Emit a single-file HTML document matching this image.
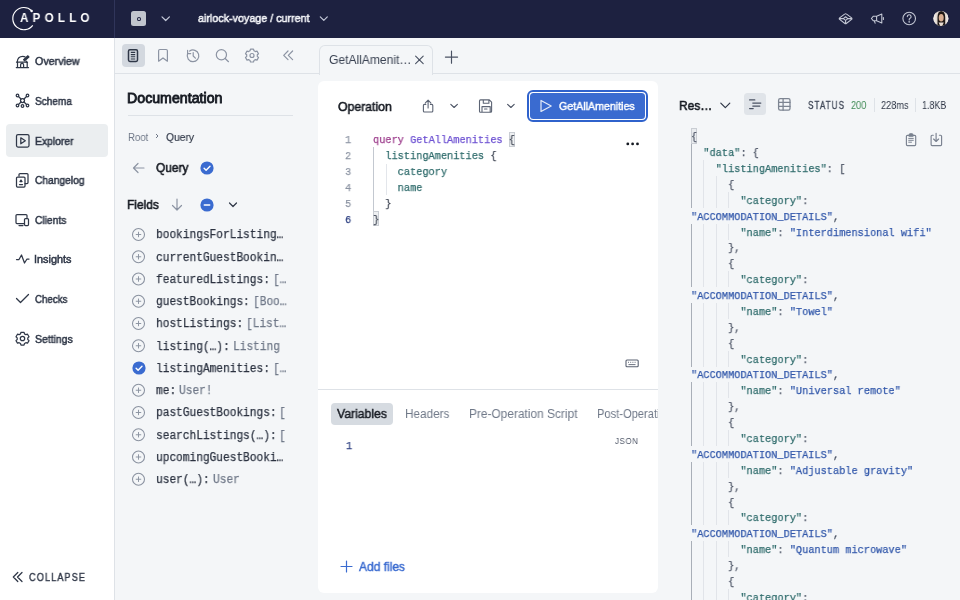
<!DOCTYPE html>
<html><head><meta charset="utf-8">
<style>
*{box-sizing:border-box;margin:0;padding:0}
html,body{width:960px;height:600px;overflow:hidden;background:#F4F6F8;font-family:"Liberation Sans",sans-serif}
.r{position:absolute}
.s{position:absolute;overflow:visible}
.t{position:absolute;white-space:pre;transform-origin:0 0;will-change:transform}
.mono{font-family:"Liberation Mono",monospace;-webkit-text-stroke:0.25px currentColor}
</style></head><body>
<div class="r" style="left:0;top:0;width:960px;height:38px;background:#1D2140"></div>
<div class="r" style="left:114px;top:0;width:1px;height:38px;background:#30355A"></div>
<svg class="s" style="left:0;top:0" width="110" height="38" viewBox="0 0 110 38">
 <path d="M31.75 10.75 A11.1 11.1 0 1 0 32.76 25.28" fill="none" stroke="#fff" stroke-width="1.15"/>
 <circle cx="31.6" cy="11" r="1.25" fill="#fff"/></svg>
<div class="r" style="left:131.25px;top:11.2px;width:14.9px;height:14.9px;border-radius:2.5px;background:#C1C5CE"></div>
<div class="r" style="left:136.8px;top:16.8px;width:4.3px;height:4px;border-radius:50%;border:1.3px solid #1D2140"></div>
<svg class="s" style="left:0;top:0" width="340" height="38" viewBox="0 0 340 38" fill="none" stroke="#C3C8D8" stroke-width="1.2" stroke-linecap="round" stroke-linejoin="round">
 <path d="M162 16.8l3.7 3.7l3.7-3.7"/><path d="M320.3 16.9l3.5 3.5l3.5-3.5"/></svg>
<svg class="s" style="left:830px;top:0" width="130" height="38" viewBox="830 0 130 38" fill="none" stroke="#C3C7D4" stroke-width="1.1" stroke-linecap="round" stroke-linejoin="round">
 <path d="M844.6 14.1a1.6 1.6 0 0 1 2 0l5 3.8a1 1 0 0 1 0 1.5l-5 3.8a1.6 1.6 0 0 1-2 0l-5-3.8a1 1 0 0 1 0-1.5z M840 18.6l3.3-.1 M848 18.6l3.5 0 M843.3 18.6l2.3-1.8l2.3 1.8l-2.3 1.8z M845.6 20.4v3.2"/>
 <path d="M871.4 18.5l2-2.3h3.2l5.2-2.2v9l-5.2-2.2h-3.2z M876.6 16.2v4.6 M874.3 20.8l.8 2.4 M883.4 17.6v1.8"/>
 <circle cx="909.2" cy="18.5" r="6.3"/>
 <path d="M907.3 16.6a1.9 1.9 0 1 1 2.6 1.8c-.5.2-.7.6-.7 1.1v.5"/><circle cx="909.2" cy="21.8" r=".3" fill="#C3C7D4"/>
</svg>
<svg class="s" style="left:933px;top:10px" width="17" height="17" viewBox="933 10 17 17">
 <defs><clipPath id="av"><circle cx="940.9" cy="18.4" r="7.5"/></clipPath></defs>
 <g clip-path="url(#av)">
  <rect x="933" y="10" width="17" height="17" fill="#E3DAD2"/>
  <path d="M937.5 27V17c0-4 1.6-6 3.8-6s3.9 2 3.9 6v10z" fill="#1E1714"/>
  <ellipse cx="941.2" cy="17.8" rx="2.5" ry="3.8" fill="#D9AF93"/>
  <path d="M938.6 22.5c.8 1.8 1.8 4.5 2.6 4.5s1.8-2.7 2.6-4.5" fill="#E9DCD3"/>
  <rect x="933" y="10" width="2.6" height="17" fill="#EFE9E4"/>
  <rect x="946.5" y="10" width="3" height="17" fill="#EDE7E6"/>
 </g></svg>
<div class="r" style="left:0;top:38px;width:114px;height:562px;background:#fff"></div>
<div class="r" style="left:114px;top:38px;width:1px;height:562px;background:#DEE2E7"></div>
<div class="r" style="left:6.4px;top:124px;width:101.6px;height:33px;border-radius:4px;background:#EBEEF0"></div>
<svg class="s" style="left:0;top:0" width="114" height="600" viewBox="0 0 114 600" fill="none" stroke="#2F3747" stroke-width="1.25" stroke-linecap="round" stroke-linejoin="round">
 <path d="M16.3 67.6h12.2M17.5 67.6v-5.4M27.2 67.6v-5.4M16.5 62.2h11M17.2 62c.3-3.5 2.8-5.6 5.7-5.6c.8 0 1.5.2 2.1.4M20.6 67.6v-2.8a1.5 1.5 0 0 1 3 0v2.8"/><path d="M23.6 59.6l4.3-3.8l1 1.2l-4.3 3.8z" fill="#2F3747"/><path d="M26.3 61.2v1"/>
 <circle cx="22.5" cy="100.5" r="2"/><circle cx="17.5" cy="95.5" r="1.3"/><circle cx="27.5" cy="95.5" r="1.3"/><circle cx="17.5" cy="105.5" r="1.3"/><circle cx="27.5" cy="105.5" r="1.3"/><circle cx="22.5" cy="106" r="1.3"/>
 <path d="M18.5 96.5l2.5 2.5M26.5 96.5l-2.5 2.5M18.5 104.5l2.5-2.5M26.5 104.5l-2.5-2.5"/>
 <rect x="16.5" y="134.5" width="12.5" height="12.5" rx="1.5"/><path d="M20.8 137.8v6l4.5-3z"/>
 <rect x="16.5" y="177" width="8.5" height="10" rx="1"/><path d="M19 176v-1.5a1 1 0 0 1 1-1h7a1 1 0 0 1 1 1v8a1 1 0 0 1-1 1h-2M19.5 184.5h3M21 180l1 1.5h-2z"/>
 <path d="M24 223.5h-7a1 1 0 0 1-1-1v-7a1 1 0 0 1 1-1h9a1 1 0 0 1 1 1v2M19 225.5h4"/><rect x="24.5" y="218.5" width="4" height="7" rx="1"/>
 <path d="M16.5 259.5h2.5l2.5-4.5l3 8l2.5-4h2"/>
 <path d="M16.5 298.5l4 4l8-8"/>
 <circle cx="22.5" cy="338.5" r="2.2"/>
 <path d="M21 332.3h3l.5 1.6 1.4.8 1.6-.5 1.5 2.6-1.2 1.1v1.6l1.2 1.1-1.5 2.6-1.6-.5-1.4.8-.5 1.6h-3l-.5-1.6-1.4-.8-1.6.5-1.5-2.6 1.2-1.1v-1.6l-1.2-1.1 1.5-2.6 1.6.5 1.4-.8z"/>
 <path d="M17.8 572.5L13.3 577l4.5 4.5M22 572.5L17.5 577l4.5 4.5"/>
</svg>
<div class="r" style="left:115px;top:73px;width:845px;height:1px;background:#DEE2E7"></div>
<div class="r" style="left:121.5px;top:44px;width:23px;height:22.5px;border-radius:4px;background:#D3D8DF"></div>
<svg class="s" style="left:0;top:0" width="310" height="80" viewBox="0 0 310 80" fill="none" stroke-width="1.2" stroke-linecap="round" stroke-linejoin="round">
 <g stroke="#2F3747"><rect x="128.5" y="49.8" width="9" height="11.6" rx="1.4" stroke-width="1.5"/><path d="M130.8 52.4h4.4M130.8 54.6h4.4M130.8 56.8h4.4M130.8 59h4.4" stroke-width="1.1" stroke-linecap="butt"/></g>
 <g stroke="#8C94A3">
 <path d="M158.6 61.2V50.8a1.3 1.3 0 0 1 1.3-1.3h6.2a1.3 1.3 0 0 1 1.3 1.3v10.4l-4.4-3.3z"/>
 <path d="M189.67 51.05A5.8 5.8 0 1 1 187.55 53.82M187.6 50.4v3.2h3.1M193.2 52.6v3.4l2.2 2.1"/>
 <circle cx="221.4" cy="54.7" r="5.1"/><path d="M225.2 58.5l3.3 3.2"/>
 <circle cx="252" cy="55.5" r="2"/><path d="M250.5 49.2h3l.5 1.6 1.4.8 1.6-.5 1.5 2.6-1.2 1.1v1.6l1.2 1.1-1.5 2.6-1.6-.5-1.4.8-.5 1.6h-3l-.5-1.6-1.4-.8-1.6.5-1.5-2.6 1.2-1.1v-1.6l-1.2-1.1 1.5-2.6 1.6.5 1.4-.8z"/>
 <path d="M288 51l-4.3 4.3l4.3 4.3M292.6 51l-4.3 4.3l4.3 4.3"/>
 </g></svg>
<div class="r" style="left:128px;top:115px;width:165px;height:1px;background:#DEE2E7"></div>
<svg class="s" style="left:151px;top:129px" width="12" height="14" viewBox="0 0 12 14" fill="none" stroke="#6F7888" stroke-width="1"><path d="M5 5l2 2l-2 2"/></svg>
<svg class="s" style="left:130px;top:161px" width="16" height="14" viewBox="0 0 16 14" fill="none" stroke="#8C94A3" stroke-width="1.2" stroke-linecap="round" stroke-linejoin="round"><path d="M14 7H3.5M8 2.5L3.5 7l4.5 4.5"/></svg>
<svg class="s" style="left:199.9px;top:161.3px" width="14" height="14" viewBox="0 0 14 14"><circle cx="7" cy="7" r="6.6" fill="#3A6BD0"/><path d="M4.1 7.3l2 2l3.9-4.1" fill="none" stroke="#fff" stroke-width="1.4" stroke-linecap="round" stroke-linejoin="round"/></svg>
<svg class="s" style="left:170px;top:197px" width="14" height="16" viewBox="0 0 14 16" fill="none" stroke="#8C94A3" stroke-width="1.2" stroke-linecap="round" stroke-linejoin="round"><path d="M7 2v11M2.5 8.5L7 13l4.5-4.5"/></svg>
<svg class="s" style="left:200px;top:198px" width="14" height="14" viewBox="0 0 14 14"><circle cx="7" cy="7" r="6.6" fill="#3A6BD0"/><path d="M4.3 7h5.4" stroke="#fff" stroke-width="1.5" stroke-linecap="round"/></svg>
<svg class="s" style="left:227px;top:199px" width="12" height="12" viewBox="0 0 12 12" fill="none" stroke="#2F3747" stroke-width="1.2" stroke-linecap="round" stroke-linejoin="round"><path d="M2.5 4l3.5 3.5l3.5-3.5"/></svg>
<svg class="s" style="left:131px;top:227px" width="16" height="16" viewBox="0 0 16 16" fill="none" stroke="#8A92A0" stroke-width="1.05"><circle cx="7.5" cy="7.50" r="6"/><path d="M7.5 4.80v5.4M4.8 7.50h5.4" stroke-width=".95"/></svg>
<div class="t mono" style="left:156.2px;top:229.38px;font-size:12.0px;line-height:12.0px;color:#2B3240;transform:scaleX(0.9306)">bookingsForListing…</div>
<svg class="s" style="left:131px;top:249px" width="16" height="16" viewBox="0 0 16 16" fill="none" stroke="#8A92A0" stroke-width="1.05"><circle cx="7.5" cy="7.75" r="6"/><path d="M7.5 5.05v5.4M4.8 7.75h5.4" stroke-width=".95"/></svg>
<div class="t mono" style="left:156.2px;top:251.63px;font-size:12.0px;line-height:12.0px;color:#2B3240;transform:scaleX(0.9306)">currentGuestBookin…</div>
<svg class="s" style="left:131px;top:272px" width="16" height="16" viewBox="0 0 16 16" fill="none" stroke="#8A92A0" stroke-width="1.05"><circle cx="7.5" cy="7.00" r="6"/><path d="M7.5 4.30v5.4M4.8 7.00h5.4" stroke-width=".95"/></svg>
<div class="t mono" style="left:156.2px;top:273.88px;font-size:12.0px;line-height:12.0px;color:#2B3240;transform:scaleX(0.9306)">featuredListings:</div>
<div class="t mono" style="left:272.90px;top:273.88px;font-size:12.0px;line-height:12.0px;color:#6F7888;transform:scaleX(0.9306)">[…</div>
<svg class="s" style="left:131px;top:294px" width="16" height="16" viewBox="0 0 16 16" fill="none" stroke="#8A92A0" stroke-width="1.05"><circle cx="7.5" cy="7.25" r="6"/><path d="M7.5 4.55v5.4M4.8 7.25h5.4" stroke-width=".95"/></svg>
<div class="t mono" style="left:156.2px;top:296.13px;font-size:12.0px;line-height:12.0px;color:#2B3240;transform:scaleX(0.9306)">guestBookings:</div>
<div class="t mono" style="left:252.80px;top:296.13px;font-size:12.0px;line-height:12.0px;color:#6F7888;transform:scaleX(0.9306)">[Boo…</div>
<svg class="s" style="left:131px;top:316px" width="16" height="16" viewBox="0 0 16 16" fill="none" stroke="#8A92A0" stroke-width="1.05"><circle cx="7.5" cy="7.50" r="6"/><path d="M7.5 4.80v5.4M4.8 7.50h5.4" stroke-width=".95"/></svg>
<div class="t mono" style="left:156.2px;top:318.38px;font-size:12.0px;line-height:12.0px;color:#2B3240;transform:scaleX(0.9306)">hostListings:</div>
<div class="t mono" style="left:246.20px;top:318.38px;font-size:12.0px;line-height:12.0px;color:#6F7888;transform:scaleX(0.9306)">[List…</div>
<svg class="s" style="left:131px;top:338px" width="16" height="16" viewBox="0 0 16 16" fill="none" stroke="#8A92A0" stroke-width="1.05"><circle cx="7.5" cy="7.75" r="6"/><path d="M7.5 5.05v5.4M4.8 7.75h5.4" stroke-width=".95"/></svg>
<div class="t mono" style="left:156.2px;top:340.63px;font-size:12.0px;line-height:12.0px;color:#2B3240;transform:scaleX(0.9306)">listing(…):</div>
<div class="t mono" style="left:232.90px;top:340.63px;font-size:12.0px;line-height:12.0px;color:#6F7888;transform:scaleX(0.9306)">Listing</div>
<svg class="s" style="left:131.60px;top:361.00px" width="14" height="14" viewBox="0 0 14 14"><circle cx="7" cy="7" r="6.6" fill="#3A6BD0"/><path d="M4.1 7.3l2 2l3.9-4.1" fill="none" stroke="#fff" stroke-width="1.4" stroke-linecap="round" stroke-linejoin="round"/></svg>
<div class="t mono" style="left:156.2px;top:362.88px;font-size:12.0px;line-height:12.0px;color:#2B3240;transform:scaleX(0.9306)">listingAmenities:</div>
<div class="t mono" style="left:272.90px;top:362.88px;font-size:12.0px;line-height:12.0px;color:#6F7888;transform:scaleX(0.9306)">[…</div>
<svg class="s" style="left:131px;top:383px" width="16" height="16" viewBox="0 0 16 16" fill="none" stroke="#8A92A0" stroke-width="1.05"><circle cx="7.5" cy="7.25" r="6"/><path d="M7.5 4.55v5.4M4.8 7.25h5.4" stroke-width=".95"/></svg>
<div class="t mono" style="left:156.2px;top:385.13px;font-size:12.0px;line-height:12.0px;color:#2B3240;transform:scaleX(0.9306)">me:</div>
<div class="t mono" style="left:179.40px;top:385.13px;font-size:12.0px;line-height:12.0px;color:#6F7888;transform:scaleX(0.9306)">User!</div>
<svg class="s" style="left:131px;top:405px" width="16" height="16" viewBox="0 0 16 16" fill="none" stroke="#8A92A0" stroke-width="1.05"><circle cx="7.5" cy="7.50" r="6"/><path d="M7.5 4.80v5.4M4.8 7.50h5.4" stroke-width=".95"/></svg>
<div class="t mono" style="left:156.2px;top:407.38px;font-size:12.0px;line-height:12.0px;color:#2B3240;transform:scaleX(0.9306)">pastGuestBookings:</div>
<div class="t mono" style="left:278.70px;top:407.38px;font-size:12.0px;line-height:12.0px;color:#6F7888;transform:scaleX(0.9306)">[</div>
<svg class="s" style="left:131px;top:427px" width="16" height="16" viewBox="0 0 16 16" fill="none" stroke="#8A92A0" stroke-width="1.05"><circle cx="7.5" cy="7.75" r="6"/><path d="M7.5 5.05v5.4M4.8 7.75h5.4" stroke-width=".95"/></svg>
<div class="t mono" style="left:156.2px;top:429.63px;font-size:12.0px;line-height:12.0px;color:#2B3240;transform:scaleX(0.9306)">searchListings(…):</div>
<div class="t mono" style="left:278.70px;top:429.63px;font-size:12.0px;line-height:12.0px;color:#6F7888;transform:scaleX(0.9306)">[</div>
<svg class="s" style="left:131px;top:450px" width="16" height="16" viewBox="0 0 16 16" fill="none" stroke="#8A92A0" stroke-width="1.05"><circle cx="7.5" cy="7.00" r="6"/><path d="M7.5 4.30v5.4M4.8 7.00h5.4" stroke-width=".95"/></svg>
<div class="t mono" style="left:156.2px;top:451.88px;font-size:12.0px;line-height:12.0px;color:#2B3240;transform:scaleX(0.9306)">upcomingGuestBooki…</div>
<svg class="s" style="left:131px;top:472px" width="16" height="16" viewBox="0 0 16 16" fill="none" stroke="#8A92A0" stroke-width="1.05"><circle cx="7.5" cy="7.25" r="6"/><path d="M7.5 4.55v5.4M4.8 7.25h5.4" stroke-width=".95"/></svg>
<div class="t mono" style="left:156.2px;top:474.13px;font-size:12.0px;line-height:12.0px;color:#2B3240;transform:scaleX(0.9306)">user(…):</div>
<div class="t mono" style="left:212.80px;top:474.13px;font-size:12.0px;line-height:12.0px;color:#6F7888;transform:scaleX(0.9306)">User</div>
<div class="r" style="left:318.5px;top:44.5px;width:114px;height:30px;border:1px solid #DEE2E7;border-bottom:none;border-radius:6px 6px 0 0;background:#F4F6F8"></div>
<svg class="s" style="left:0;top:0" width="480" height="80" viewBox="0 0 480 80" fill="none" stroke="#2F3747" stroke-width="1.2" stroke-linecap="round">
 <path d="M415.6 56.1l7.6 7.6M423.2 56.1l-7.6 7.6" stroke="#4A5263" stroke-width="1.1"/><path d="M451.5 51v12.2M445.4 57.1h12.2" stroke="#4A5263" stroke-width="1.15"/></svg>
<div class="r" style="left:318px;top:80.7px;width:339.5px;height:512.8px;background:#fff;border-radius:6px"></div>
<svg class="s" style="left:0;top:0" width="660" height="130" viewBox="0 0 660 130" fill="none" stroke="#5C6474" stroke-width="1.1" stroke-linecap="round" stroke-linejoin="round">
 <path d="M428.1 100.2v7.8M425.4 102.8l2.7-2.7l2.7 2.7M425.8 104.4h-1.4a1 1 0 0 0-1 1v5.6a1 1 0 0 0 1 1h7.4a1 1 0 0 0 1-1v-5.6a1 1 0 0 0-1-1h-1.4"/>
 <path d="M450.8 104.3l3.3 3.2l3.3-3.2" stroke="#4A5263"/>
 <path d="M480.5 99.9h8.8l2.3 2.3v9a1 1 0 0 1-1 1h-10.1a1 1 0 0 1-1-1v-10.3a1 1 0 0 1 1-1z M483.3 100v3.3h5.6v-3.3M482 112v-5.4h8.2v5.4M484.5 109h2.5"/>
 <path d="M507.6 104.3l3.3 3.2l3.3-3.2" stroke="#4A5263"/>
</svg>
<div class="r" style="left:527px;top:89.8px;width:120.8px;height:31.8px;border:2px solid #2F62CC;border-radius:6px;background:#fff"></div>
<div class="r" style="left:530px;top:93px;width:115px;height:25.6px;border-radius:3.5px;background:#3A6BD0"></div>
<svg class="s" style="left:536px;top:96px" width="20" height="20" viewBox="536 96 20 20" fill="none" stroke="#E6ECF8" stroke-width="1.2" stroke-linejoin="round"><path d="M541 100.5v11l10.2-5.5z"/></svg>
<svg class="s" style="left:624px;top:139px" width="18" height="10" viewBox="0 0 18 10" fill="#161A22"><circle cx="3.8" cy="4.9" r="1.4"/><circle cx="8.6" cy="4.9" r="1.4"/><circle cx="13.5" cy="4.9" r="1.4"/></svg>
<div class="t mono" style="left:345.20px;top:134.46px;font-size:11.5px;line-height:11.5px;color:#8C94A3;transform:scaleX(0.8942)">1</div>
<div class="t mono" style="left:345.20px;top:150.29px;font-size:11.5px;line-height:11.5px;color:#8C94A3;transform:scaleX(0.8942)">2</div>
<div class="t mono" style="left:345.20px;top:166.12px;font-size:11.5px;line-height:11.5px;color:#8C94A3;transform:scaleX(0.8942)">3</div>
<div class="t mono" style="left:345.20px;top:181.95px;font-size:11.5px;line-height:11.5px;color:#8C94A3;transform:scaleX(0.8942)">4</div>
<div class="t mono" style="left:345.20px;top:197.78px;font-size:11.5px;line-height:11.5px;color:#8C94A3;transform:scaleX(0.8942)">5</div>
<div class="t mono" style="left:345.20px;top:213.61px;font-size:11.5px;line-height:11.5px;color:#2B3E80;transform:scaleX(0.8942)">6</div>
<div class="r" style="left:373px;top:147px;width:1px;height:64px;background:#C3C8D0"></div>
<div class="r" style="left:386px;top:164px;width:1px;height:31px;background:#E3E6EB"></div>
<div class="r" style="left:509.2px;top:132px;width:6.3px;height:15px;background:#EEF0F2;border:1px solid #C9CDD3"></div>
<div class="r" style="left:373px;top:211px;width:6.3px;height:15px;background:#EEF0F2;border:1px solid #C9CDD3"></div>
<div class="t mono" style="left:373.00px;top:134.46px;font-size:11.5px;line-height:11.5px;color:#2E6B6B;transform:scaleX(0.8942)"><span style="color:#9B3B8B">query</span> <span style="color:#6C50D2">GetAllAmenities</span> <span style="color:#3D4452">{</span></div>
<div class="t mono" style="left:373.00px;top:150.29px;font-size:11.5px;line-height:11.5px;color:#2E6B6B;transform:scaleX(0.8942)">  listingAmenities <span style="color:#3D4452">{</span></div>
<div class="t mono" style="left:373.00px;top:166.12px;font-size:11.5px;line-height:11.5px;color:#2E6B6B;transform:scaleX(0.8942)">    category</div>
<div class="t mono" style="left:373.00px;top:181.95px;font-size:11.5px;line-height:11.5px;color:#2E6B6B;transform:scaleX(0.8942)">    name</div>
<div class="t mono" style="left:373.00px;top:197.78px;font-size:11.5px;line-height:11.5px;color:#2E6B6B;transform:scaleX(0.8942)">  <span style="color:#3D4452">}</span></div>
<div class="t mono" style="left:373.00px;top:213.61px;font-size:11.5px;line-height:11.5px;color:#2E6B6B;transform:scaleX(0.8942)"><span style="color:#3D4452">}</span></div>
<svg class="s" style="left:620px;top:355px" width="24" height="16" viewBox="620 355 24 16" fill="none" stroke="#5A6272" stroke-width="1.1">
 <rect x="626" y="360" width="12.2" height="6.8" rx="1"/><path d="M628 362.3h1M630.2 362.3h1M632.4 362.3h1M634.6 362.3h1M628.5 364.6h7" stroke-width=".9"/></svg>
<div class="r" style="left:318px;top:389px;width:339.5px;height:1px;background:#DEE2E7"></div>
<div class="r" style="left:331px;top:402.6px;width:62.3px;height:22px;border-radius:4px;background:#D6DBE1"></div>
<div class="r" style="left:590px;top:400px;width:67.5px;height:30px;overflow:hidden"><div class="t" id="post" style="left:7px;top:7.6px;font:normal 12.5px/12.5px 'Liberation Sans';color:#6F7888;transform:scaleX(0.89)">Post-Operation Script</div></div>
<div class="t mono" style="left:345.70px;top:440.06px;font-size:11.5px;line-height:11.5px;color:#2B3E80;transform:scaleX(0.8942)">1</div>
<svg class="s" style="left:336px;top:555px" width="20" height="20" viewBox="336 555 20 20" fill="none" stroke="#3A6BD0" stroke-width="1.2" stroke-linecap="round"><path d="M346.5 561v11M341 566.5h11"/></svg>
<svg class="s" style="left:716px;top:98px" width="18" height="14" viewBox="716 98 18 14" fill="none" stroke="#2F3747" stroke-width="1.2" stroke-linecap="round" stroke-linejoin="round"><path d="M720.8 103.2l4.5 4.5l4.5-4.5"/></svg>
<div class="r" style="left:744.4px;top:93.3px;width:21.5px;height:22.2px;border-radius:3.5px;background:#E0E4E9"></div>
<svg class="s" style="left:740px;top:90px" width="60" height="30" viewBox="740 90 60 30" fill="none" stroke-width="1.25" stroke-linecap="round">
 <path d="M749.6 99.9h5.2M752.8 103h8M752.8 106h7M749.6 108.6h3.6" stroke="#4A5263"/>
 <rect x="778.6" y="98.6" width="11.4" height="11.6" rx="1.6" stroke="#7D8592" stroke-width="1.3"/><path d="M778.6 102.4h11.4M778.6 106.4h11.4M783.1 98.6v11.6" stroke="#7D8592" stroke-width="1.3"/>
</svg>
<div class="r" style="left:874px;top:98px;width:1px;height:14px;background:#DEE2E7"></div>
<div class="r" style="left:915px;top:98px;width:1px;height:14px;background:#DEE2E7"></div>
<svg class="s" style="left:900px;top:128px" width="50" height="22" viewBox="900 128 50 22" fill="none" stroke="#7A8290" stroke-width="1.15" stroke-linecap="round" stroke-linejoin="round">
 <path d="M909 135.3h-1.6a1 1 0 0 0-1 1v8.3a1 1 0 0 0 1 1h7.3a1 1 0 0 0 1-1v-8.3a1 1 0 0 0-1-1h-1.6"/>
 <path d="M909.2 136.2v-1.4a1 1 0 0 1 1-1h1.7a1 1 0 0 1 1 1v1.4z" fill="#7A8290"/>
 <path d="M908.7 138.4h4.6M908.7 140.3h4.6M908.7 142.2h2.8" stroke-width="1"/>
 <path d="M933.3 135.2h-1.2a1 1 0 0 0-1 1v8.4a1 1 0 0 0 1 1h8.5a1 1 0 0 0 1-1v-8.4a1 1 0 0 0-1-1h-1.2M936.1 133.2v8.2M933.6 139l2.5 2.5l2.5-2.5"/>
</svg>
<div class="r" style="left:691px;top:143.88px;width:1.4px;height:63.92px;background:#A9AFB8"></div>
<div class="r" style="left:691px;top:223.68px;width:1.4px;height:63.52px;background:#A9AFB8"></div>
<div class="r" style="left:691px;top:303.08px;width:1.4px;height:63.52px;background:#A9AFB8"></div>
<div class="r" style="left:691px;top:382.48px;width:1.4px;height:63.52px;background:#A9AFB8"></div>
<div class="r" style="left:691px;top:461.88px;width:1.4px;height:63.52px;background:#A9AFB8"></div>
<div class="r" style="left:691px;top:541.28px;width:1.4px;height:79.40px;background:#A9AFB8"></div>
<div class="r" style="left:703.3px;top:160.16px;width:1px;height:47.64px;background:#E1E4E9"></div>
<div class="r" style="left:703.3px;top:223.68px;width:1px;height:63.52px;background:#E1E4E9"></div>
<div class="r" style="left:703.3px;top:303.08px;width:1px;height:63.52px;background:#E1E4E9"></div>
<div class="r" style="left:703.3px;top:382.48px;width:1px;height:63.52px;background:#E1E4E9"></div>
<div class="r" style="left:703.3px;top:461.88px;width:1px;height:63.52px;background:#E1E4E9"></div>
<div class="r" style="left:703.3px;top:541.28px;width:1px;height:79.40px;background:#E1E4E9"></div>
<div class="r" style="left:715.6px;top:176.04px;width:1px;height:31.76px;background:#E1E4E9"></div>
<div class="r" style="left:715.6px;top:223.68px;width:1px;height:63.52px;background:#E1E4E9"></div>
<div class="r" style="left:715.6px;top:303.08px;width:1px;height:63.52px;background:#E1E4E9"></div>
<div class="r" style="left:715.6px;top:382.48px;width:1px;height:63.52px;background:#E1E4E9"></div>
<div class="r" style="left:715.6px;top:461.88px;width:1px;height:63.52px;background:#E1E4E9"></div>
<div class="r" style="left:715.6px;top:541.28px;width:1px;height:79.40px;background:#E1E4E9"></div>
<div class="r" style="left:728.2px;top:191.92px;width:1px;height:15.88px;background:#E1E4E9"></div>
<div class="r" style="left:728.2px;top:223.68px;width:1px;height:15.88px;background:#E1E4E9"></div>
<div class="r" style="left:728.2px;top:271.32px;width:1px;height:15.88px;background:#E1E4E9"></div>
<div class="r" style="left:728.2px;top:303.08px;width:1px;height:15.88px;background:#E1E4E9"></div>
<div class="r" style="left:728.2px;top:350.72px;width:1px;height:15.88px;background:#E1E4E9"></div>
<div class="r" style="left:728.2px;top:382.48px;width:1px;height:15.88px;background:#E1E4E9"></div>
<div class="r" style="left:728.2px;top:430.12px;width:1px;height:15.88px;background:#E1E4E9"></div>
<div class="r" style="left:728.2px;top:461.88px;width:1px;height:15.88px;background:#E1E4E9"></div>
<div class="r" style="left:728.2px;top:509.52px;width:1px;height:15.88px;background:#E1E4E9"></div>
<div class="r" style="left:728.2px;top:541.28px;width:1px;height:15.88px;background:#E1E4E9"></div>
<div class="r" style="left:728.2px;top:588.92px;width:1px;height:31.76px;background:#E1E4E9"></div>
<div class="r" style="left:691px;top:128.4px;width:6px;height:15.3px;background:#E9ECEF;border:1px solid #C9CDD3"></div>
<div class="t mono" style="left:691.00px;top:131.26px;font-size:11.5px;line-height:11.5px;color:#4A5263;transform:scaleX(0.8942)">{</div>
<div class="t mono" style="left:691.00px;top:147.14px;font-size:11.5px;line-height:11.5px;color:#4A5263;transform:scaleX(0.8942)">  <span style="color:#2E6B6B">"data"</span>: {</div>
<div class="t mono" style="left:691.00px;top:163.02px;font-size:11.5px;line-height:11.5px;color:#4A5263;transform:scaleX(0.8942)">    <span style="color:#2E6B6B">"listingAmenities"</span>: [</div>
<div class="t mono" style="left:691.00px;top:178.90px;font-size:11.5px;line-height:11.5px;color:#4A5263;transform:scaleX(0.8942)">      {</div>
<div class="t mono" style="left:691.00px;top:194.78px;font-size:11.5px;line-height:11.5px;color:#4A5263;transform:scaleX(0.8942)">        <span style="color:#2E6B6B">"category"</span>:</div>
<div class="t mono" style="left:691.00px;top:210.66px;font-size:11.5px;line-height:11.5px;color:#4A5263;transform:scaleX(0.8942)"><span style="color:#3157AA">"ACCOMMODATION_DETAILS"</span>,</div>
<div class="t mono" style="left:691.00px;top:226.54px;font-size:11.5px;line-height:11.5px;color:#4A5263;transform:scaleX(0.8942)">        <span style="color:#2E6B6B">"name"</span>: <span style="color:#3157AA">"Interdimensional wifi"</span></div>
<div class="t mono" style="left:691.00px;top:242.42px;font-size:11.5px;line-height:11.5px;color:#4A5263;transform:scaleX(0.8942)">      },</div>
<div class="t mono" style="left:691.00px;top:258.30px;font-size:11.5px;line-height:11.5px;color:#4A5263;transform:scaleX(0.8942)">      {</div>
<div class="t mono" style="left:691.00px;top:274.18px;font-size:11.5px;line-height:11.5px;color:#4A5263;transform:scaleX(0.8942)">        <span style="color:#2E6B6B">"category"</span>:</div>
<div class="t mono" style="left:691.00px;top:290.06px;font-size:11.5px;line-height:11.5px;color:#4A5263;transform:scaleX(0.8942)"><span style="color:#3157AA">"ACCOMMODATION_DETAILS"</span>,</div>
<div class="t mono" style="left:691.00px;top:305.94px;font-size:11.5px;line-height:11.5px;color:#4A5263;transform:scaleX(0.8942)">        <span style="color:#2E6B6B">"name"</span>: <span style="color:#3157AA">"Towel"</span></div>
<div class="t mono" style="left:691.00px;top:321.82px;font-size:11.5px;line-height:11.5px;color:#4A5263;transform:scaleX(0.8942)">      },</div>
<div class="t mono" style="left:691.00px;top:337.70px;font-size:11.5px;line-height:11.5px;color:#4A5263;transform:scaleX(0.8942)">      {</div>
<div class="t mono" style="left:691.00px;top:353.58px;font-size:11.5px;line-height:11.5px;color:#4A5263;transform:scaleX(0.8942)">        <span style="color:#2E6B6B">"category"</span>:</div>
<div class="t mono" style="left:691.00px;top:369.46px;font-size:11.5px;line-height:11.5px;color:#4A5263;transform:scaleX(0.8942)"><span style="color:#3157AA">"ACCOMMODATION_DETAILS"</span>,</div>
<div class="t mono" style="left:691.00px;top:385.34px;font-size:11.5px;line-height:11.5px;color:#4A5263;transform:scaleX(0.8942)">        <span style="color:#2E6B6B">"name"</span>: <span style="color:#3157AA">"Universal remote"</span></div>
<div class="t mono" style="left:691.00px;top:401.22px;font-size:11.5px;line-height:11.5px;color:#4A5263;transform:scaleX(0.8942)">      },</div>
<div class="t mono" style="left:691.00px;top:417.10px;font-size:11.5px;line-height:11.5px;color:#4A5263;transform:scaleX(0.8942)">      {</div>
<div class="t mono" style="left:691.00px;top:432.98px;font-size:11.5px;line-height:11.5px;color:#4A5263;transform:scaleX(0.8942)">        <span style="color:#2E6B6B">"category"</span>:</div>
<div class="t mono" style="left:691.00px;top:448.86px;font-size:11.5px;line-height:11.5px;color:#4A5263;transform:scaleX(0.8942)"><span style="color:#3157AA">"ACCOMMODATION_DETAILS"</span>,</div>
<div class="t mono" style="left:691.00px;top:464.74px;font-size:11.5px;line-height:11.5px;color:#4A5263;transform:scaleX(0.8942)">        <span style="color:#2E6B6B">"name"</span>: <span style="color:#3157AA">"Adjustable gravity"</span></div>
<div class="t mono" style="left:691.00px;top:480.62px;font-size:11.5px;line-height:11.5px;color:#4A5263;transform:scaleX(0.8942)">      },</div>
<div class="t mono" style="left:691.00px;top:496.50px;font-size:11.5px;line-height:11.5px;color:#4A5263;transform:scaleX(0.8942)">      {</div>
<div class="t mono" style="left:691.00px;top:512.38px;font-size:11.5px;line-height:11.5px;color:#4A5263;transform:scaleX(0.8942)">        <span style="color:#2E6B6B">"category"</span>:</div>
<div class="t mono" style="left:691.00px;top:528.26px;font-size:11.5px;line-height:11.5px;color:#4A5263;transform:scaleX(0.8942)"><span style="color:#3157AA">"ACCOMMODATION_DETAILS"</span>,</div>
<div class="t mono" style="left:691.00px;top:544.14px;font-size:11.5px;line-height:11.5px;color:#4A5263;transform:scaleX(0.8942)">        <span style="color:#2E6B6B">"name"</span>: <span style="color:#3157AA">"Quantum microwave"</span></div>
<div class="t mono" style="left:691.00px;top:560.02px;font-size:11.5px;line-height:11.5px;color:#4A5263;transform:scaleX(0.8942)">      },</div>
<div class="t mono" style="left:691.00px;top:575.90px;font-size:11.5px;line-height:11.5px;color:#4A5263;transform:scaleX(0.8942)">      {</div>
<div class="t mono" style="left:691.00px;top:591.78px;font-size:11.5px;line-height:11.5px;color:#4A5263;transform:scaleX(0.8942)">        <span style="color:#2E6B6B">"category"</span>:</div>
<div class="t" style="left:19.75px;top:11.87px;font:bold 12.8px/12.8px 'Liberation Sans';color:#fff;letter-spacing:4.6px;transform:scaleX(0.9114);">APOLLO</div>
<div class="t" style="left:197.80px;top:13.47px;font:normal 11.8px/11.8px 'Liberation Sans';color:#F4F5F9;transform:scaleX(0.9098);-webkit-text-stroke:0.55px #F4F5F9;">airlock-voyage / current</div>
<div class="t" style="left:35.40px;top:56.22px;font:normal 10.8px/10.8px 'Liberation Sans';color:#2F3747;transform:scaleX(0.9890);-webkit-text-stroke:0.5px #2F3747;">Overview</div>
<div class="t" style="left:35.40px;top:95.86px;font:normal 10.8px/10.8px 'Liberation Sans';color:#2F3747;transform:scaleX(0.9343);-webkit-text-stroke:0.5px #2F3747;">Schema</div>
<div class="t" style="left:35.40px;top:135.50px;font:normal 10.8px/10.8px 'Liberation Sans';color:#2F3747;transform:scaleX(0.9604);-webkit-text-stroke:0.5px #2F3747;">Explorer</div>
<div class="t" style="left:35.40px;top:175.14px;font:normal 10.8px/10.8px 'Liberation Sans';color:#2F3747;transform:scaleX(0.9478);-webkit-text-stroke:0.5px #2F3747;">Changelog</div>
<div class="t" style="left:35.40px;top:214.78px;font:normal 10.8px/10.8px 'Liberation Sans';color:#2F3747;transform:scaleX(0.9523);-webkit-text-stroke:0.5px #2F3747;">Clients</div>
<div class="t" style="left:34.39px;top:254.42px;font:normal 10.8px/10.8px 'Liberation Sans';color:#2F3747;transform:scaleX(1.0051);-webkit-text-stroke:0.5px #2F3747;">Insights</div>
<div class="t" style="left:35.40px;top:294.06px;font:normal 10.8px/10.8px 'Liberation Sans';color:#2F3747;transform:scaleX(0.9016);-webkit-text-stroke:0.5px #2F3747;">Checks</div>
<div class="t" style="left:35.40px;top:333.70px;font:normal 10.8px/10.8px 'Liberation Sans';color:#2F3747;transform:scaleX(0.9694);-webkit-text-stroke:0.5px #2F3747;">Settings</div>
<div class="t" style="left:29.20px;top:573.10px;font:normal 10px/10px 'Liberation Sans';color:#2F3747;letter-spacing:1.2px;transform:scaleX(0.9133);-webkit-text-stroke:0.4px #2F3747;">COLLAPSE</div>
<div class="t" style="left:127.19px;top:90.80px;font:normal 14px/14px 'Liberation Sans';color:#161A22;transform:scaleX(1.0132);-webkit-text-stroke:0.85px #161A22;">Documentation</div>
<div class="t" style="left:128.20px;top:131.53px;font:normal 11.5px/11.5px 'Liberation Sans';color:#6F7888;transform:scaleX(0.8368);">Root</div>
<div class="t" style="left:165.50px;top:131.53px;font:normal 11.5px/11.5px 'Liberation Sans';color:#2F3747;transform:scaleX(0.8965);-webkit-text-stroke:0.15px #2F3747;">Query</div>
<div class="t" style="left:156.20px;top:160.98px;font:normal 13.2px/13.2px 'Liberation Sans';color:#161A22;transform:scaleX(0.9031);-webkit-text-stroke:0.6px #161A22;">Query</div>
<div class="t" style="left:127.29px;top:197.88px;font:normal 13.2px/13.2px 'Liberation Sans';color:#161A22;transform:scaleX(0.9051);-webkit-text-stroke:0.6px #161A22;">Fields</div>
<div class="t" style="left:328.50px;top:54.08px;font:normal 12.5px/12.5px 'Liberation Sans';color:#3A4252;transform:scaleX(0.9637);">GetAllAmenit…</div>
<div class="t" style="left:337.70px;top:101.17px;font:normal 12.5px/12.5px 'Liberation Sans';color:#161A22;transform:scaleX(0.9792);-webkit-text-stroke:0.55px #161A22;">Operation</div>
<div class="t" style="left:558.90px;top:100.82px;font:normal 11.5px/11.5px 'Liberation Sans';color:#fff;transform:scaleX(0.9262);-webkit-text-stroke:0.45px #fff;">GetAllAmenities</div>
<div class="t" style="left:337.40px;top:407.57px;font:normal 12.5px/12.5px 'Liberation Sans';color:#161A22;transform:scaleX(0.9738);-webkit-text-stroke:0.45px #161A22;">Variables</div>
<div class="t" style="left:405.46px;top:407.57px;font:normal 12.5px/12.5px 'Liberation Sans';color:#6F7888;transform:scaleX(0.9392);">Headers</div>
<div class="t" style="left:468.55px;top:407.57px;font:normal 12.5px/12.5px 'Liberation Sans';color:#6F7888;transform:scaleX(0.9519);">Pre-Operation Script</div>
<div class="t" style="left:614.70px;top:436.52px;font:normal 8.8px/8.8px 'Liberation Sans';color:#4A5263;letter-spacing:0.9px;transform:scaleX(0.8757);">JSON</div>
<div class="t" style="left:359.30px;top:559.95px;font:normal 13px/13px 'Liberation Sans';color:#3A6BD0;transform:scaleX(0.9214);-webkit-text-stroke:0.45px #3A6BD0;">Add files</div>
<div class="t" style="left:679.11px;top:98.73px;font:normal 13.5px/13.5px 'Liberation Sans';color:#161A22;transform:scaleX(0.8855);-webkit-text-stroke:0.6px #161A22;">Res…</div>
<div class="t" style="left:808.00px;top:100.80px;font:normal 10px/10px 'Liberation Sans';color:#3F4757;letter-spacing:1.3px;transform:scaleX(0.8104);-webkit-text-stroke:0.3px #3F4757;">STATUS</div>
<div class="t" style="left:851.00px;top:99.67px;font:normal 10.5px/10.5px 'Liberation Sans';color:#3F8A55;transform:scaleX(0.8711);">200</div>
<div class="t" style="left:880.60px;top:99.67px;font:normal 10.5px/10.5px 'Liberation Sans';color:#2F3747;transform:scaleX(0.8764);">228ms</div>
<div class="t" style="left:922.00px;top:99.67px;font:normal 10.5px/10.5px 'Liberation Sans';color:#2F3747;transform:scaleX(0.8532);">1.8KB</div>
</body></html>
